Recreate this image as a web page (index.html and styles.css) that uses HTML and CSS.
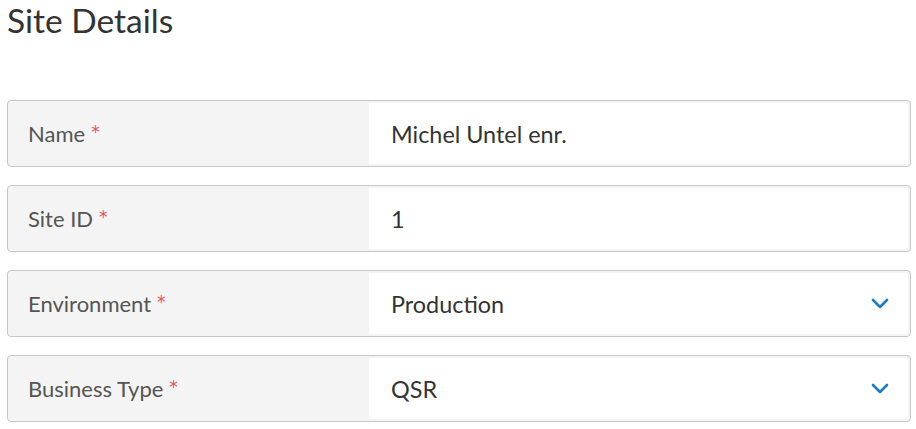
FILE: index.html
```html
<!DOCTYPE html>
<html>
<head>
<meta charset="utf-8">
<link rel="stylesheet" href="styles.css">
</head>
<body>
<h1 class="title">Site Details</h1>
<div class="form">
  <div class="row">
    <div class="label">Name <span class="req">*</span></div>
    <div class="field">Michel Untel enr.</div>
  </div>
  <div class="row">
    <div class="label">Site ID <span class="req">*</span></div>
    <div class="field">1</div>
  </div>
  <div class="row">
    <div class="label">Environment <span class="req">*</span></div>
    <div class="field select">Production
      <svg class="chev" width="18" height="11" viewBox="0 0 18 11"><path d="M2 2 L9 9 L16 2" fill="none" stroke="#1b7bc4" stroke-width="2.6" stroke-linecap="round" stroke-linejoin="round"/></svg>
    </div>
  </div>
  <div class="row">
    <div class="label">Business Type <span class="req">*</span></div>
    <div class="field select">QSR
      <svg class="chev" width="18" height="11" viewBox="0 0 18 11"><path d="M2 2 L9 9 L16 2" fill="none" stroke="#1b7bc4" stroke-width="2.6" stroke-linecap="round" stroke-linejoin="round"/></svg>
    </div>
  </div>
</div>
</body>
</html>
```
FILE: styles.css
```css
html, body { margin: 0; padding: 0; background: #fff; }
body { font-family: Lato, "Source Sans Pro", sans-serif; }
.title {
  margin: 0;
  padding: 0 0 0 7px;
  height: 100px;
  box-sizing: border-box;
  font-size: 33.5px;
  font-weight: 400;
  color: #333;
  line-height: 40px;
}
.form {
  display: flex;
  flex-direction: column;
  gap: 18px;
  padding: 0 5px 0 7px;
}
.row {
  display: flex;
  height: 67px;
  box-sizing: border-box;
  border: 1px solid #c8c8c8;
  border-radius: 4px;
  background: #f4f4f4;
  padding: 2px 2px 2px 0;
}
.label {
  width: 361px;
  padding-left: 20px;
  box-sizing: border-box;
  display: flex;
  align-items: center;
  font-size: 22px;
  color: #555;
}
.req {
  color: #ef4a64;
  margin-left: 6px;
  font-family: "DejaVu Sans", sans-serif;
  font-size: 17px;
  position: relative;
  top: -2px;
}
.field {
  flex: 1;
  background: #fff;
  display: flex;
  align-items: center;
  padding-left: 22px;
  padding-right: 19px;
  font-size: 23.4px;
  color: #333;
  border-radius: 0 3px 3px 0;
}
.select { justify-content: space-between; }
.chev { display: block; }
```
